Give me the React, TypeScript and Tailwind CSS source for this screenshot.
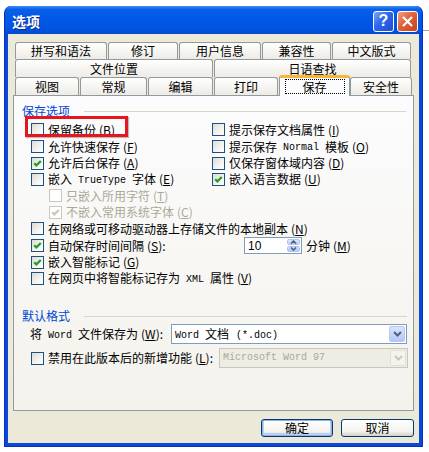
import React from "react";

const F = "font-['Noto_Sans_CJK_SC','Noto_Sans',sans-serif]";

function Acc({ k, colon }: { k: string; colon?: boolean }) {
  return (
    <span className="ml-[3px] inline-flex items-center">
      <span>(</span>
      <span className="underline underline-offset-[1px]">{k}</span>
      <span>){colon ? ":" : ""}</span>
    </span>
  );
}

function M({ children }: { children: React.ReactNode }) {
  return (
    <span className="font-['Liberation_Mono',monospace] text-[10px] mx-[6px] pt-[3px]">
      {children}
    </span>
  );
}

function T({ children }: { children: React.ReactNode }) {
  return <span>{children}</span>;
}

function Box({ checked, disabled }: { checked?: boolean; disabled?: boolean }) {
  return (
    <span
      className={
        disabled
          ? "w-[13px] h-[13px] shrink-0 border border-[#CAC8BB] bg-white flex items-center justify-center"
          : "w-[13px] h-[13px] shrink-0 border border-[#1C5180] bg-[linear-gradient(135deg,#DCDCD7,#F2F2EE_55%,#FFFFFF)] flex items-center justify-center"
      }
    >
      {checked && (
        <svg width="11" height="11" viewBox="0 0 11 11">
          <path
            d="M2.2 5.2 L4.4 7.4 L8.8 3"
            fill="none"
            stroke={disabled ? "#CAC8BB" : "#21A121"}
            strokeWidth="2.3"
          />
        </svg>
      )}
    </span>
  );
}

function Check({
  checked,
  disabled,
  children,
}: {
  checked?: boolean;
  disabled?: boolean;
  children: React.ReactNode;
}) {
  return (
    <div className="flex items-center gap-[4px] whitespace-nowrap">
      <Box checked={checked} disabled={disabled} />
      <span className={disabled ? "flex items-center text-[#ACA899]" : "flex items-center text-black"}>
        {children}
      </span>
    </div>
  );
}

function Chevron({ color }: { color: string }) {
  return (
    <svg width="9" height="6" viewBox="0 0 9 6">
      <path d="M1 1 L4.5 4.5 L8 1" fill="none" stroke={color} strokeWidth="2" />
    </svg>
  );
}

function Tab({ className, children }: { className: string; children: React.ReactNode }) {
  return (
    <div
      className={
        "h-full border border-b-0 border-[#919B9C] rounded-t-[3px] bg-[linear-gradient(to_bottom,#FFFFFF,#F5F4F0_55%,#ECEBE6)] flex items-center justify-center text-[12px] text-black shrink-0 " +
        className
      }
    >
      {children}
    </div>
  );
}

export default function App() {
  return (
    <div className={"w-[429px] h-[452px] bg-white flex items-start overflow-hidden " + F}>
      {/* window */}
      <div className="ml-[4px] mt-[6px] w-[419px] h-[441px] rounded-t-[7px] bg-[#0A48DC] border border-[#0831B8] border-t-0 flex flex-col">
        {/* title bar */}
        <div className="h-[28px] rounded-t-[7px] bg-[linear-gradient(to_bottom,#3D8CF6_0%,#0A5FE8_12%,#0058E8_45%,#0054E2_80%,#004AD0_100%)] flex items-center pl-[7px] pr-[4px] pt-[2px]">
          <span className="text-white font-bold text-[14px] [text-shadow:1px_1px_0_#0F2A8C] leading-none">
            选项
          </span>
          <div className="ml-auto flex items-center gap-[3px]">
            <div className="w-[21px] h-[21px] rounded-[3px] border border-white bg-[linear-gradient(135deg,#7BA4FA,#2D67EA_45%,#1A4ED6)] flex items-center justify-center">
              <span className="text-white font-bold text-[16px] leading-none font-['Liberation_Sans',sans-serif]">?</span>
            </div>
            <div className="w-[21px] h-[21px] rounded-[3px] border border-white bg-[linear-gradient(135deg,#F2A286,#E0613A_45%,#C8401C)] flex items-center justify-center">
              <svg width="11" height="11" viewBox="0 0 11 11">
                <path d="M1 1 L10 10 M10 1 L1 10" stroke="white" strokeWidth="2.2" />
              </svg>
            </div>
          </div>
        </div>
        {/* client */}
        <div className="flex-1 mx-[3px] mb-[3px] bg-[#ECE9D8] pl-[5px] pr-[5px] pt-[8px] flex flex-col">
          {/* tabs */}
          <div className="flex flex-col pl-[2px]">
            <div className="h-[17px] flex gap-[1px]">
              <Tab className="w-[92px]">拼写和语法</Tab>
              <Tab className="w-[70px]">修订</Tab>
              <Tab className="w-[82px]">用户信息</Tab>
              <Tab className="w-[69px]">兼容性</Tab>
              <Tab className="w-[79px]">中文版式</Tab>
            </div>
            <div className="h-[18px] flex gap-[1px]">
              <Tab className="w-[198px]">文件位置</Tab>
              <Tab className="w-[197px]">日语查找</Tab>
            </div>
            <div className="h-[18px] flex">
              <Tab className="w-[64px]">视图</Tab>
              <Tab className="w-[67px] ml-[1px]">常规</Tab>
              <Tab className="w-[65px] ml-[1px]">编辑</Tab>
              <Tab className="w-[64px] ml-[1px]">打印</Tab>
              <div className="relative z-10 w-[71px] h-[21px] -mt-[2px] ml-[1px] shrink-0 rounded-t-[3px] border border-b-0 border-[#919B9C] border-t-[3px] border-t-[#F7B53A] bg-[#FCFCFE] flex items-start justify-center pt-[1px]">
                <div className="w-[60px] h-[15px] border border-dotted border-black flex items-center justify-center text-[12px]">
                  保存
                </div>
              </div>
              <Tab className="w-[62px]">安全性</Tab>
            </div>
          </div>
          {/* panel */}
          <div className="h-[316px] border border-[#919B9C] bg-[linear-gradient(to_bottom,#FCFCFE,#F7F6F2_60%,#F3F2EC)] flex flex-col text-[12px] leading-none">
            <div className="mt-[7px] h-[16px] pl-[8px] pr-[7px] flex items-center">
              <span className="text-[#0046D5]">保存选项</span>
              <div className="flex-1 ml-[14px] border-t border-[#D8D6CB]" />
            </div>
            <div className="mt-[2px] flex flex-col pl-[17px]">
              <div className="h-[17px] flex items-center">
                <div className="w-[181px] relative">
                  <div className="absolute left-[-6px] top-[-7px] w-[103px] h-[21px] border-[3px] border-[#E5161E] shadow-[1px_1px_1px_rgba(0,0,0,0.25)]" />
                  <Check>
                    <T>保留备份</T>
                    <Acc k="B" />
                  </Check>
                </div>
                <Check>
                  <T>提示保存文档属性</T>
                  <Acc k="I" />
                </Check>
              </div>
              <div className="h-[17px] flex items-center">
                <div className="w-[181px]">
                  <Check>
                    <T>允许快速保存</T>
                    <Acc k="F" />
                  </Check>
                </div>
                <Check>
                  <T>提示保存</T>
                  <M>Normal</M>
                  <T>模板</T>
                  <Acc k="O" />
                </Check>
              </div>
              <div className="h-[16px] flex items-center">
                <div className="w-[181px]">
                  <Check checked>
                    <T>允许后台保存</T>
                    <Acc k="A" />
                  </Check>
                </div>
                <Check>
                  <T>仅保存窗体域内容</T>
                  <Acc k="D" />
                </Check>
              </div>
              <div className="h-[16px] flex items-center">
                <div className="w-[181px]">
                  <Check>
                    <T>嵌入</T>
                    <M>TrueType</M>
                    <T>字体</T>
                    <Acc k="E" />
                  </Check>
                </div>
                <Check checked>
                  <T>嵌入语言数据</T>
                  <Acc k="U" />
                </Check>
              </div>
              <div className="h-[17px] flex items-center pl-[18px]">
                <Check disabled>
                  <T>只嵌入所用字符</T>
                  <Acc k="T" />
                </Check>
              </div>
              <div className="h-[16px] flex items-center pl-[18px]">
                <Check disabled checked>
                  <T>不嵌入常用系统字体</T>
                  <Acc k="C" />
                </Check>
              </div>
              <div className="h-[17px] flex items-center">
                <Check>
                  <T>在网络或可移动驱动器上存储文件的本地副本</T>
                  <Acc k="N" />
                </Check>
              </div>
              <div className="h-[17px] flex items-center">
                <div className="w-[213px]">
                  <Check checked>
                    <T>自动保存时间间隔</T>
                    <Acc k="S" colon />
                  </Check>
                </div>
                <div className="w-[58px] h-[17px] border border-[#7F9DB9] bg-white flex items-stretch">
                  <span className="flex-1 pl-[3px] flex items-center font-['Liberation_Sans',sans-serif] text-[12px]">
                    10
                  </span>
                  <div className="w-[15px] flex flex-col gap-[1px] p-[1px]">
                    <div className="flex-1 rounded-[2px] border border-[#B3C5F2] bg-[linear-gradient(to_bottom,#E0E8FD,#BCCDF8)] flex items-center justify-center">
                      <svg width="7" height="4" viewBox="0 0 7 4">
                        <path d="M1 3.5 L3.5 1 L6 3.5" fill="none" stroke="#4D6185" strokeWidth="1.6" />
                      </svg>
                    </div>
                    <div className="flex-1 rounded-[2px] border border-[#B3C5F2] bg-[linear-gradient(to_bottom,#D5E0FC,#B4C6F6)] flex items-center justify-center">
                      <svg width="7" height="4" viewBox="0 0 7 4">
                        <path d="M1 0.5 L3.5 3 L6 0.5" fill="none" stroke="#4D6185" strokeWidth="1.6" />
                      </svg>
                    </div>
                  </div>
                </div>
                <span className="ml-[4px] flex items-center">
                  <T>分钟</T>
                  <Acc k="M" />
                </span>
              </div>
              <div className="h-[16px] flex items-center">
                <Check checked>
                  <T>嵌入智能标记</T>
                  <Acc k="G" />
                </Check>
              </div>
              <div className="h-[16px] flex items-center">
                <Check>
                  <T>在网页中将智能标记存为</T>
                  <M>XML</M>
                  <T>属性</T>
                  <Acc k="V" />
                </Check>
              </div>
            </div>
            <div className="mt-[22px] h-[16px] pl-[8px] pr-[6px] flex items-center">
              <span className="text-[#0046D5]">默认格式</span>
              <div className="flex-1 ml-[14px] border-t border-[#D8D6CB]" />
            </div>
            <div className="h-[20px] flex items-center pl-[16px]">
              <span className="w-[141px] whitespace-nowrap flex items-center">
                <T>将</T>
                <M>Word</M>
                <T>文件保存为</T>
                <Acc k="W" colon />
              </span>
              <div className="w-[236px] h-[20px] border border-[#7F9DB9] bg-white flex items-stretch">
                <span className="flex-1 pl-[3px] flex items-center whitespace-nowrap">
                  <span className="font-['Liberation_Mono',monospace] text-[10px] mr-[6px] pt-[3px]">Word</span>
                  <T>文档</T>
                  <span className="font-['Liberation_Mono',monospace] text-[10px] ml-[7px] pt-[3px]">(*.doc)</span>
                </span>
                <div className="w-[16px] m-[1px] rounded-[2px] border border-[#B6C9F6] bg-[linear-gradient(to_bottom,#D9E4FD,#B3C6F5)] flex items-center justify-center">
                  <Chevron color="#4D6185" />
                </div>
              </div>
            </div>
            <div className="mt-[4px] h-[20px] flex items-center pl-[17px]">
              <div className="w-[188px]">
                <Check>
                  <T>禁用在此版本后的新增功能</T>
                  <Acc k="L" colon />
                </Check>
              </div>
              <div className="w-[189px] h-[20px] border border-[#C9C7BA] bg-[#EEEDE5] flex items-stretch">
                <span className="flex-1 pl-[3px] flex items-center text-[#ACA899] font-['Liberation_Mono',monospace] text-[10px] whitespace-nowrap">
                  Microsoft Word 97
                </span>
                <div className="w-[16px] m-[1px] rounded-[2px] border border-[#E2E0D6] bg-[#F4F3EE] flex items-center justify-center">
                  <Chevron color="#C9C7BA" />
                </div>
              </div>
            </div>
          </div>
          {/* buttons */}
          <div className="mt-[8px] flex justify-end gap-[8px]">
            <button className="w-[72px] h-[18px] rounded-[3px] border border-[#003C74] bg-[linear-gradient(to_bottom,#FFFFFF,#F4F3EE_70%,#D6D0C5)] shadow-[inset_0_0_0_1px_#8FAEEB,inset_0_-1px_0_2px_#BCD0F5] text-[12px] leading-none flex items-center justify-center">
              确定
            </button>
            <button className="w-[73px] h-[18px] rounded-[3px] border border-[#003C74] bg-[linear-gradient(to_bottom,#FFFFFF,#F4F3EE_70%,#D6D0C5)] text-[12px] leading-none flex items-center justify-center">
              取消
            </button>
          </div>
        </div>
      </div>
      <div className="flex-1 mt-[30px] h-px bg-[#A0A0A0]" />
    </div>
  );
}
